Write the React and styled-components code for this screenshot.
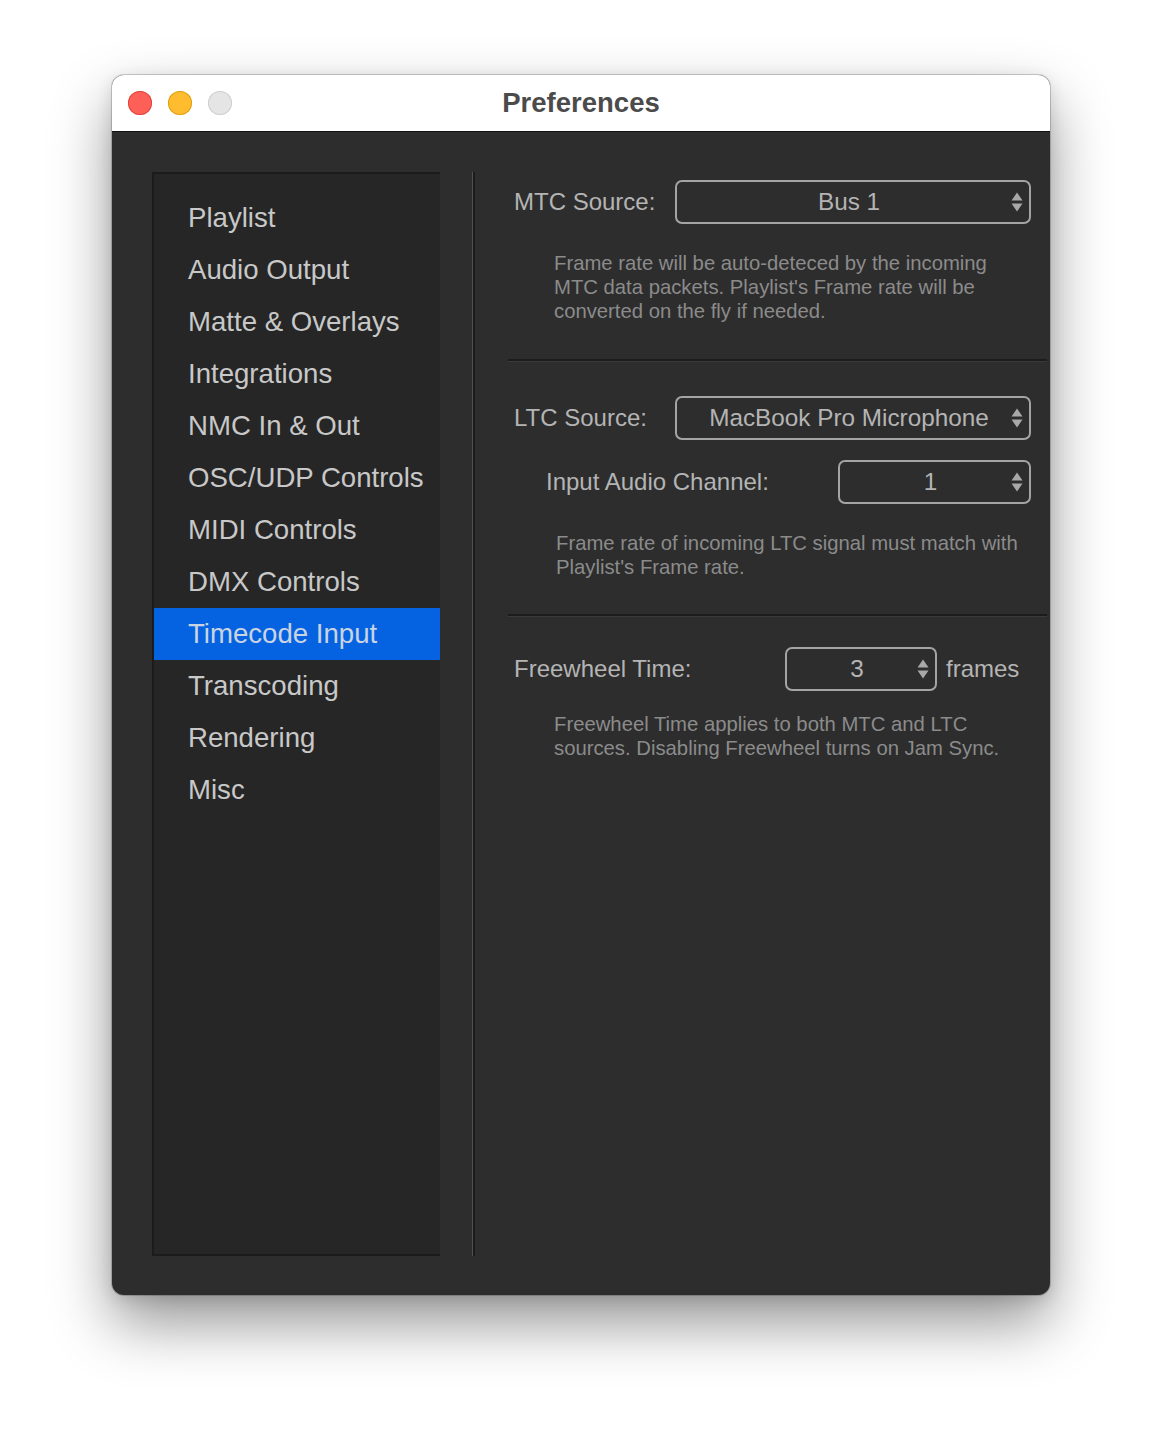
import React from "react";
import styled, { createGlobalStyle } from "styled-components";

const Global = createGlobalStyle`
  html, body { margin: 0; padding: 0; background: #ffffff; }
  body { font-family: "Liberation Sans", Arial, sans-serif; }
`;

const Page = styled.div`
  width: 1162px;
  height: 1444px;
  box-sizing: border-box;
  padding: 75px 0 0 112px;
  background: #ffffff;
`;

const Window = styled.div`
  width: 938px;
  height: 1220px;
  border-radius: 12px;
  overflow: hidden;
  display: flex;
  flex-direction: column;
  background: #2d2d2d;
  box-shadow: 0 0 0 1px rgba(0,0,0,0.18), 0 28px 60px rgba(0,0,0,0.42), 0 4px 16px rgba(0,0,0,0.12);
`;

const TitleBar = styled.div`
  height: 56px;
  flex: none;
  background: #ffffff;
  border-bottom: 1px solid #111;
  display: flex;
  align-items: center;
  position: relative;
  padding-left: 16px;
`;

const Lights = styled.div`
  display: flex;
  gap: 16px;
`;

const Light = styled.span`
  width: 24px;
  height: 24px;
  border-radius: 50%;
  background: ${p => p.$c};
  box-shadow: inset 0 0 0 1px ${p => p.$b};
`;

const Title = styled.div`
  position: absolute;
  left: 0;
  right: 0;
  top: 0;
  bottom: 0;
  display: flex;
  align-items: center;
  justify-content: center;
  font-weight: bold;
  font-size: 27.5px;
  color: #4b4b4b;
  pointer-events: none;
`;

const Body = styled.div`
  flex: 1;
  display: flex;
  padding: 40px 3px 39px 40px;
  box-sizing: border-box;
`;

const Sidebar = styled.div`
  width: 288px;
  flex: none;
  box-sizing: border-box;
  background: #262626;
  border-left: 2px solid #1b1b1b;
  border-top: 2px solid #1b1b1b;
  border-bottom: 2px solid #1b1b1b;
  padding-top: 18px;
  display: flex;
  flex-direction: column;
`;

const Item = styled.div`
  height: 52px;
  display: flex;
  align-items: center;
  padding-left: 34px;
  font-size: 27.6px;
  color: ${p => (p.$active ? "#c9d3e2" : "#c8c8c8")};
  background: ${p => (p.$active ? "#0563e1" : "transparent")};
`;

const Divider = styled.div`
  width: 3px;
  flex: none;
  margin-left: 32px;
  background: linear-gradient(to right, #505050 0, #505050 1px, #1c1c1c 1px, #1c1c1c 3px);
`;

const Panel = styled.div`
  flex: 1;
  margin-left: 33px;
  display: flex;
  flex-direction: column;
`;

const Section = styled.div`
  padding: ${p => p.$pt}px 16px ${p => p.$pb}px 6px;
  display: flex;
  flex-direction: column;
`;

const Separator = styled.div`
  height: 2px;
  background: #1c1c1c;
  border-bottom: 1px solid #3a3a3a;
`;

const Row = styled.div`
  display: flex;
  align-items: center;
  height: 44px;
  margin-top: ${p => p.$mt || 0}px;
  padding-left: ${p => p.$indent || 0}px;
`;

const Label = styled.div`
  font-size: 24px;
  color: #b4b4b4;
  width: ${p => p.$w}px;
  flex: none;
  white-space: nowrap;
`;

const Popup = styled.div`
  width: ${p => p.$w}px;
  height: 44px;
  box-sizing: border-box;
  border: 2px solid #a4a4a4;
  border-radius: 7px;
  display: flex;
  align-items: center;
  padding: 0 6px 0 10px;
  flex: none;
`;

const PopupText = styled.div`
  flex: 1;
  text-align: center;
  font-size: 24.3px;
  color: #b4b4b4;
  white-space: nowrap;
`;

const Arrows = styled.svg`
  width: 12px;
  height: 22px;
  flex: none;
`;

const Suffix = styled.div`
  font-size: 24px;
  color: #b4b4b4;
  margin-left: 9px;
`;

const Note = styled.div`
  font-size: 20.3px;
  line-height: 24px;
  color: #8b8b8b;
  white-space: nowrap;
  margin-top: ${p => p.$mt}px;
  padding-left: ${p => p.$indent}px;
`;

const Chevrons = () => (
  <Arrows viewBox="0 0 12 22">
    <path d="M6 1.5 L11.5 9.5 L0.5 9.5 Z" fill="#a8a8a8" />
    <path d="M6 20.5 L11.5 12.5 L0.5 12.5 Z" fill="#a8a8a8" />
  </Arrows>
);

const Select = ({ w, value }) => (
  <Popup $w={w}>
    <PopupText>{value}</PopupText>
    <Chevrons />
  </Popup>
);

const items = [
  "Playlist",
  "Audio Output",
  "Matte & Overlays",
  "Integrations",
  "NMC In & Out",
  "OSC/UDP Controls",
  "MIDI Controls",
  "DMX Controls",
  "Timecode Input",
  "Transcoding",
  "Rendering",
  "Misc",
];

export default function App() {
  return (
    <Page>
      <Global />
      <Window>
        <TitleBar>
          <Lights>
            <Light $c="#fe5f57" $b="#e2463f" />
            <Light $c="#febc2e" $b="#e1a116" />
            <Light $c="#e5e5e5" $b="#cfcfcf" />
          </Lights>
          <Title>Preferences</Title>
        </TitleBar>
        <Body>
          <Sidebar>
            {items.map(t => (
              <Item key={t} $active={t === "Timecode Input"}>
                {t}
              </Item>
            ))}
          </Sidebar>
          <Divider />
          <Panel>
            <Section $pt={8} $pb={36}>
              <Row>
                <Label $w={161}>MTC Source:</Label>
                <Select w={356} value="Bus 1" />
              </Row>
              <Note $mt={27} $indent={40}>
                Frame rate will be auto-deteced by the incoming
                <br />
                MTC data packets. Playlist's Frame rate will be
                <br />
                converted on the fly if needed.
              </Note>
            </Section>
            <Separator />
            <Section $pt={34} $pb={35}>
              <Row>
                <Label $w={161}>LTC Source:</Label>
                <Select w={356} value="MacBook Pro Microphone" />
              </Row>
              <Row $mt={20} $indent={32}>
                <Label $w={292}>Input Audio Channel:</Label>
                <Select w={193} value="1" />
              </Row>
              <Note $mt={27} $indent={42}>
                Frame rate of incoming LTC signal must match with
                <br />
                Playlist's Frame rate.
              </Note>
            </Section>
            <Separator />
            <Section $pt={30} $pb={0}>
              <Row>
                <Label $w={271}>Freewheel Time:</Label>
                <Select w={152} value="3" />
                <Suffix>frames</Suffix>
              </Row>
              <Note $mt={21} $indent={40}>
                Freewheel Time applies to both MTC and LTC
                <br />
                sources. Disabling Freewheel turns on Jam Sync.
              </Note>
            </Section>
          </Panel>
        </Body>
      </Window>
    </Page>
  );
}
